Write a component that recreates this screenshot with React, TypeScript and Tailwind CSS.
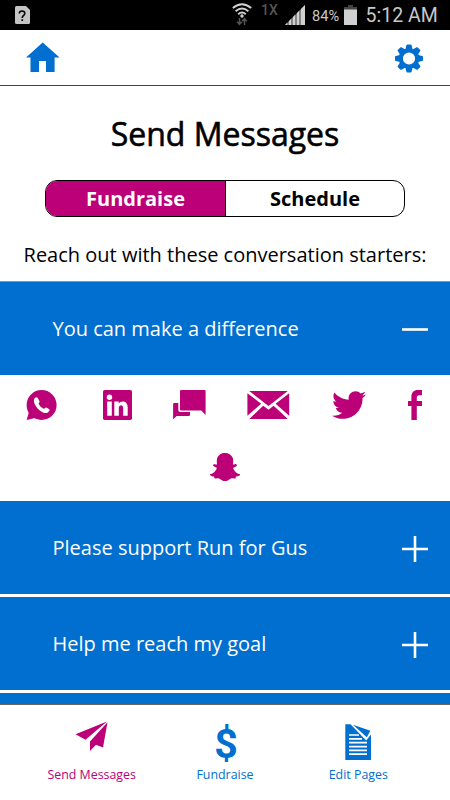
import React from 'react';
import { FaSnapchatGhost, FaTwitter } from 'react-icons/fa';

interface StarterRowProps {
  title: string;
  open?: boolean;
}

interface NavItemProps {
  label: string;
  active?: boolean;
  children: React.ReactNode;
}

const StatusBar: React.FC = () => (
  <div className="flex items-start h-[30px] bg-black text-[#c8c8c8] font-['Roboto',sans-serif]">
    {/* SIM */}
    <svg className="ml-[15px] mt-1.5" width="15" height="18" viewBox="0 0 15 18">
      <path d="M1.5 0H11L15 4V16.5Q15 18 13.5 18H1.5Q0 18 0 16.5V1.5Q0 0 1.5 0Z" fill="#c4c4c4" />
      <path d="M4.3 7.6C4.3 4 9.8 4.2 9.8 7.4C9.8 9.3 7.2 9.6 7.2 12" stroke="#000" strokeWidth="1.6" fill="none" />
      <rect x="6.4" y="13.2" width="1.7" height="1.7" fill="#000" />
    </svg>
    {/* Wifi */}
    <svg className="ml-[202px] mt-[3px]" width="20" height="23" viewBox="0 0 20 23" fill="none">
      <path d="M.8 5Q10-2.6 19.2 5M3.6 8.2Q10 2.8 16.4 8.2M6.2 11.2Q10 8 13.8 11.2" stroke="#d0d0d0" strokeWidth="1.9" />
      <circle cx="10" cy="13" r="1.7" fill="#d0d0d0" />
      <path d="M7.5 15V21M5.2 18.7L7.5 21.3L9.8 18.7M12.5 22V16M10.2 18.3L12.5 15.7L14.8 18.3" stroke="#555" strokeWidth="1.5" />
    </svg>
    <span className="ml-[9px] mt-[2px] w-[24px] text-[14px] leading-[16px] font-medium text-[#555]">1X</span>
    {/* Signal */}
    <svg className="mt-[5px]" width="20" height="20" viewBox="0 0 20 20">
      <path d="M0 20L20 0V20Z" fill="#858585" />
      <path d="M0 20L2 18V20ZM4 20V16L6 14V20ZM8 20V12L10 10V20ZM12 20V8L14 6V20ZM16 20V4L20 0V20Z" fill="#d0d0d0" />
    </svg>
    <span className="ml-[7px] mt-[7px] w-[32px] text-[14.6px] leading-[18px]">84%</span>
    {/* Battery */}
    <svg className="mt-[5px]" width="13" height="20" viewBox="0 0 13 20">
      <path d="M4 0H9V2H13V5H0V2H4Z" fill="#444" />
      <rect y="4.5" width="13" height="15.5" fill="#d0d0d0" />
    </svg>
    <span className="ml-[8.5px] mt-1 text-[19.5px] leading-[24px] whitespace-nowrap">5:12 AM</span>
  </div>
);

const Header: React.FC = () => (
  <div className="flex justify-between h-14 pl-[26px] pr-[26px] border-b border-[#444] text-[#006fd0]">
    <svg className="mt-3" width="34" height="30" viewBox="0 0 34 30" fill="currentColor">
      <path d="M16.7.5L33.6 15.6H28.6V30H20V19H13V30H4.5V15.6H-.2Z" />
    </svg>
    <svg className="mt-3.5" width="29" height="29" viewBox="-14 -14.5 29 29" fill="currentColor">
      {[0, 45, 90, 135].map((angle) => (
        <path key={angle} transform={`rotate(${angle})`} d="M-3.6-9L-2.6-13.2Q-2.4-14-1.7-14H1.7Q2.4-14 2.6-13.2L3.6-9V-7H-3.6ZM-3.6 9L-2.6 13.2Q-2.4 14-1.7 14H1.7Q2.4 14 2.6 13.2L3.6 9V7H-3.6Z" />
      ))}
      <circle r="8.2" fill="none" stroke="currentColor" strokeWidth="4.2" />
    </svg>
  </div>
);

const ShareIcons: React.FC = () => (
  <div className="h-[126px] text-[#bb0078]">
    <div className="flex gap-[41px] pl-[26px] pt-[15px]">
      {/* WhatsApp */}
      <svg width="36" height="30" viewBox="0 0 36 30">
        <circle cx="15.6" cy="15" r="15" fill="currentColor" />
        <path d="M.6 30L3 22L9 28Z" fill="currentColor" />
        <path d="M8.2 8.7C9.2 7.2 11 6.5 11.8 8L13.5 11.2C13.9 12.2 12.4 13.2 12.7 13.8C13.8 16.2 15.4 17.7 17.6 18.7C18.3 19 19.4 17.1 20.2 17.5L23.3 19.2C24.2 19.7 22.8 22.2 21.3 22.8C16 24.8 6 14.4 8.2 8.7Z" fill="#fff" />
      </svg>
      {/* LinkedIn */}
      <svg width="29" height="30" viewBox="0 0 29 30">
        <rect width="29" height="30" rx="1.8" fill="currentColor" />
        <circle cx="6.5" cy="7.2" r="2.7" fill="#fff" />
        <path d="M4.2 11.6H8.8V25.7H4.2ZM11.3 11.6H15.7V13.5C17.6 10.3 24.7 10.3 24.7 17.3V25.7H20.2V18.5C20.2 14 15.8 14.2 15.8 18.5V25.7H11.3Z" fill="#fff" />
      </svg>
      {/* Chat */}
      <svg width="33" height="30" viewBox="0 0 33 30" fill="currentColor">
        <path d="M8.2 0H31.5Q32.6 0 32.6 1.2V25L28.3 20.5H8.2Q7 20.5 7 19.3V1.2Q7 0 8.2 0Z" />
        <path d="M1.2 13H5.3V20Q5.3 22 7.3 22H17V24.8Q17 26 15.8 26H3.7L.1 29.3V14.2Q.1 13 1.2 13Z" />
      </svg>
      {/* Mail */}
      <svg width="43" height="30" viewBox="0 0 43 30" fill="currentColor">
        <path d="M2.2 1H40.8L21.5 16ZM.4 3.2L14.2 13.8L.4 25.8ZM42.2 3.2V25.8L28.6 13.8ZM2.3 29L16.2 15.7L21.5 19.8L26.6 15.7L40.8 29Z" />
      </svg>
      <FaTwitter className="w-9 h-[34px] -mt-[2px]" />
      {/* Facebook */}
      <svg width="14" height="30" viewBox="0 0 14 30" fill="currentColor">
        <path d="M3.4 30V16H0V11H3.4V7C3.4 2.2 5.8 0 10 0H14V5.2H11.3C9.4 5.2 8.8 6 8.8 7.8V11H14V16H8.8V30Z" />
      </svg>
    </div>
    <div className="flex justify-center mt-[29.5px]">
      <FaSnapchatGhost className="w-[30px] h-[30px]" />
    </div>
  </div>
);

const StarterRow: React.FC<StarterRowProps> = ({ title, open }) => (
  <div className="flex items-center justify-between h-[93px] pl-[52.5px] pr-[22px] bg-[#006fd0] text-white">
    <span className="text-[20px]">{title}</span>
    <svg className="mt-[3px]" width="26" height="26" viewBox="0 0 26 26" stroke="currentColor" strokeWidth="2.6">
      <path d={open ? 'M0 12.5H26' : 'M0 13H26M13 0V26'} />
    </svg>
  </div>
);

const NavItem: React.FC<NavItemProps> = ({ label, active, children }) => (
  <div className={active ? 'flex flex-col items-center text-[#bb0078]' : 'flex flex-col items-center text-[#006fd0]'}>
    <div className="flex h-[61px] items-start pt-4">{children}</div>
    <span className="text-[12.4px] leading-[17px] whitespace-nowrap">{label}</span>
  </div>
);

const App: React.FC = () => {
  return (
    <div className="flex flex-col w-[450px] h-[800px] overflow-hidden bg-white text-black font-['Open_Sans',sans-serif]">
      <StatusBar />
      <Header />

      <h1 className="mt-[26px] text-center text-[32px] leading-[44px] font-medium [-webkit-text-stroke:0.6px_black]">
        Send Messages
      </h1>

      {/* Tabs */}
      <div className="flex w-[360px] h-[37px] mt-6 mx-auto rounded-[12px] border border-black overflow-hidden text-center text-[20px] leading-[35px] font-bold">
        <div className="w-[180px] bg-[#bb0078] text-white border-r border-black">Fundraise</div>
        <div className="flex-1">Schedule</div>
      </div>

      <p className="mt-6 h-[40px] text-center text-[20px] leading-[28px] whitespace-nowrap">
        Reach out with these conversation starters:
      </p>

      {/* Conversation starters */}
      <div className="flex-1 min-h-0 overflow-hidden border-t border-[#5a9fe0]">
        <StarterRow title="You can make a difference" open />
        <ShareIcons />
        <div className="flex flex-col gap-[3px]">
          <StarterRow title="Please support Run for Gus" />
          <StarterRow title="Help me reach my goal" />
          <div className="h-5 bg-[#006fd0]" />
        </div>
      </div>

      {/* Bottom nav */}
      <div className="grid grid-cols-3 h-24 px-[25px] border-t border-[#666]">
        <NavItem label="Send Messages" active>
          <svg width="33" height="31" viewBox="0 0 33 31" fill="currentColor">
            <path d="M32 .5L.5 13.2L10.5 18.7ZM32.5 1.2L28 26.5L21 23.8L15 30V20.5Z" />
          </svg>
        </NavItem>
        <NavItem label="Fundraise">
          <span className="mt-[3px] pl-0.5 text-[41px] leading-[40px] font-bold font-['Roboto',sans-serif]">$</span>
        </NavItem>
        <NavItem label="Edit Pages">
          <svg className="mt-[3px]" width="27" height="36" viewBox="0 0 27 36">
            <path d="M.3.3H5.5L21.2 16.4L26 10.5V36H.3Z" fill="currentColor" />
            <path d="M8 .8L25.4 6.8L21.8 13.2Z" fill="currentColor" />
            <path d="M4 11H14M4 14.8H17M4 18.7H22M4 22.6H22M4 26.4H22M4 30.2H22" stroke="#fff" strokeWidth="1.7" />
          </svg>
        </NavItem>
      </div>
    </div>
  );
};

export default App;
